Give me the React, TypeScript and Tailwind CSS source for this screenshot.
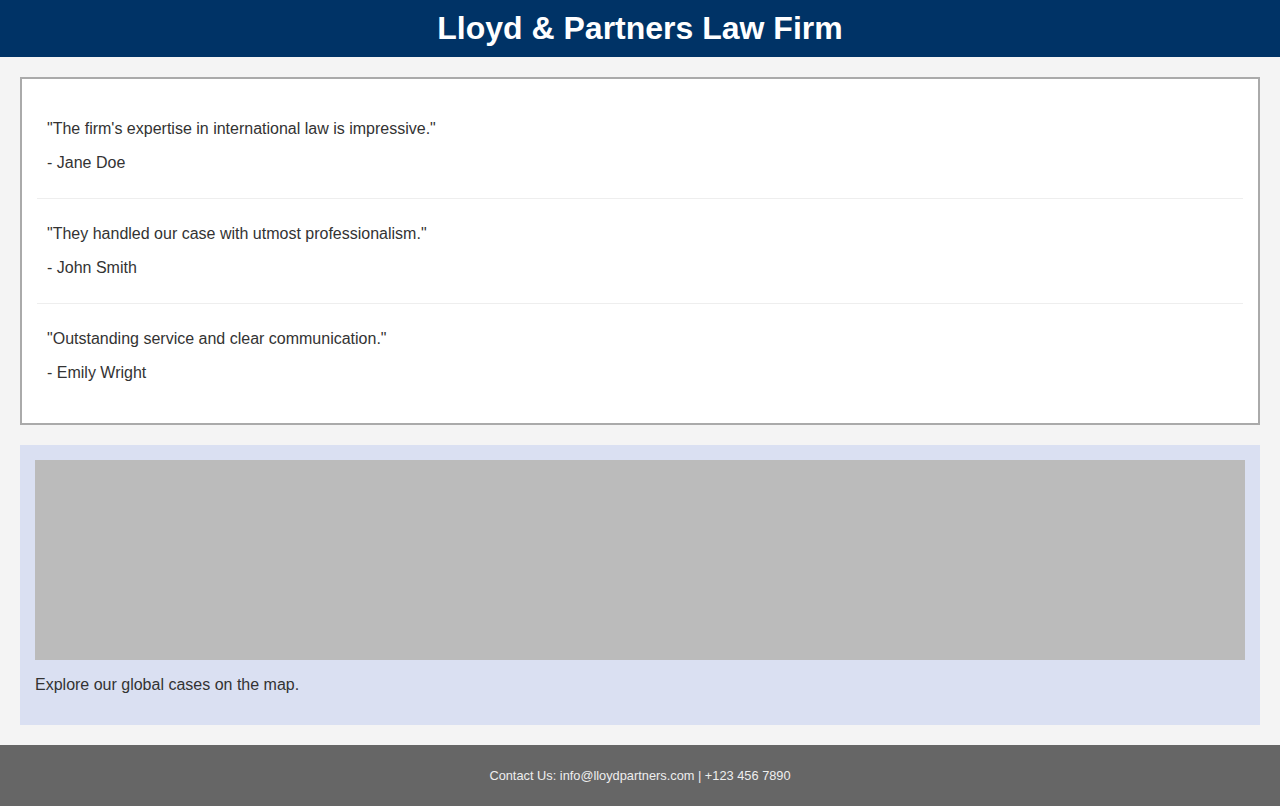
const testimonials = [
  { quote: "The firm's expertise in international law is impressive.", author: 'Jane Doe' },
  { quote: 'They handled our case with utmost professionalism.', author: 'John Smith' },
  { quote: 'Outstanding service and clear communication.', author: 'Emily Wright' },
];

export default function App() {
  return (
    <div className="min-h-screen bg-[#f4f4f4] text-[#333] font-['Liberation_Sans',Arial,sans-serif] text-[16px] leading-normal">
      {/* Header */}
      <header className="bg-[#003366] py-[10px] text-center text-white">
        <h1 className="text-[32px] font-bold leading-[37px]">Lloyd &amp; Partners Law Firm</h1>
      </header>

      <main className="flex flex-col gap-5 p-5">
        {/* Testimonials */}
        <section className="border-2 border-[#aaa] bg-white p-[15px]">
          {testimonials.map((t, i) => (
            <div
              key={t.author}
              className={`px-[10px] py-[26px] ${i < testimonials.length - 1 ? 'border-b border-[#eee]' : ''}`}
            >
              <p className="leading-[18px]">"{t.quote}"</p>
              <p className="mt-4 leading-[18px]">- {t.author}</p>
            </div>
          ))}
        </section>

        {/* Map */}
        <section className="bg-[#dae0f2] p-[15px]">
          <div className="h-[200px] bg-[#bbb]" />
          <p className="mt-4 mb-4 leading-[18px]">Explore our global cases on the map.</p>
        </section>
      </main>

      {/* Footer */}
      <footer className="bg-[#666] pt-[23px] pb-6 text-center text-[12.8px] leading-[15px] text-[#eee]">
        Contact Us: info@lloydpartners.com | +123 456 7890
      </footer>
    </div>
  );
}
